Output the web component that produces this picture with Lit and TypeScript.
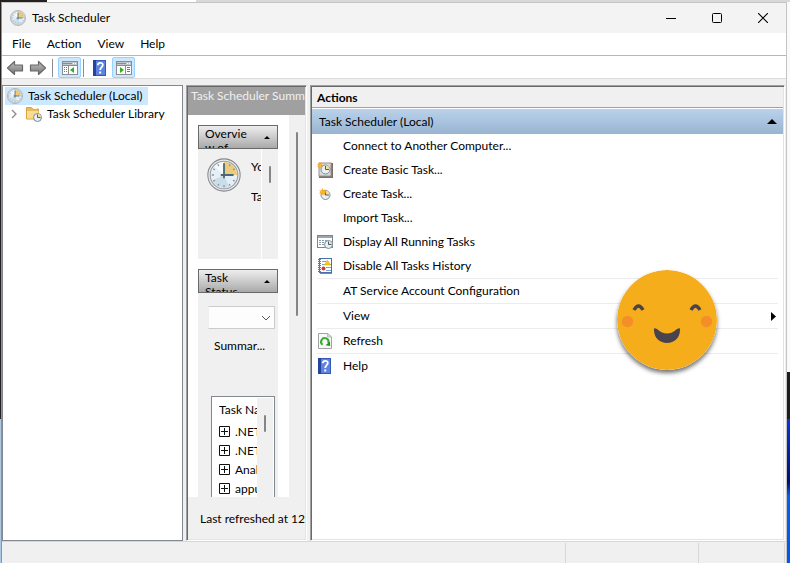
import { LitElement, html, css, svg, nothing } from "lit";
import { customElement } from "lit/decorators.js";

const clock = (size: number) => html`<svg width=${size} height=${size} viewBox="0 0 32 32" aria-hidden="true">
  <circle cx="16" cy="16" r="15.2" fill="#ececee" stroke="#85878b" stroke-width="1"></circle>
  <circle cx="16" cy="16" r="13" fill="#e6eff5" stroke="#9b9da2" stroke-width="1"></circle>
  <path d="M5 21A12 12 0 0 0 21 27L16 16Z" fill="#cadeea"></path>
  <path d="M7 8A12 12 0 0 1 16 4V16Z" fill="#f6fafc"></path>
  <path d="M16 3.7A12.3 12.3 0 0 1 28.3 16H16Z" fill="#eccb7c"></path>
  <path d="M16 25.5v2M4.5 16h2M5.9 10.2l1.6.9M10.2 5.9l.9 1.6M21.8 5.9l-.9 1.6M26.1 10.2l-1.6.9M26.1 21.8l-1.6-.9M21.8 26.1l-.9-1.6M10.2 26.1l.9-1.6M5.9 21.8l1.6-.9" stroke="#8397a8" stroke-width="1.2"></path>
  <path d="M16 5V19M13 16H25" stroke="#46687f" stroke-width="1.7" fill="none"></path>
</svg>`;

const miniClock = (x: number, y: number, r: number) => svg`
  <circle cx=${x} cy=${y} r=${r} fill="#e6f1f6" stroke="#7b8c98" stroke-width="1"></circle>
  <path d="M${x} ${y - r + 0.5}A${r - 0.5} ${r - 0.5} 0 0 1 ${x + r - 0.5} ${y}H${x}Z" fill="#f3dfa4"></path>
  <path d="M${x} ${y - r + 1}V${y}H${x + r - 1}" fill="none" stroke="#44606f" stroke-width="1"></path>`;

const star = svg`<path d="M4.500 0l1 2.700 2.700-1-1 2.600 2.600 1.200-2.800.9.6 2.700-2.600-1.400-1.800 2-.2-2.900-3 .2 2-2.200-2-1.900 2.900.1z" fill="#f5a623"></path><circle cx="4.500" cy="5" r="2" fill="#ffb52c"></circle>`;

const help = html`<svg width="13" height="16" viewBox="0 0 13 16" aria-hidden="true">
  <rect width="13" height="16" fill="#3358bd"></rect><rect x="3" y="1" width="9" height="14" fill="#5d83de"></rect>
  <path d="M0 0h3v16H0z" fill="#2444a1"></path>
  <path d="M4.800 5.200C4.900 2 10 2.100 9.800 5c0 2-2.600 2.200-2.600 5" fill="none" stroke="#fff" stroke-width="1.800"></path>
  <rect x="6.200" y="11.500" width="2" height="2" fill="#fff"></rect></svg>`;

const arrow = (forward: boolean) => html`<svg width="18" height="16" viewBox="0 0 18 16" aria-hidden="true">
  <defs><linearGradient id="metal" x2="0" y2="1"><stop stop-color="#c2c2c2"></stop><stop offset="1" stop-color="#747474"></stop></linearGradient></defs>
  <path d=${forward ? "M16.500 8L9.500 1.500V5H1.500v6h8v3.500z" : "M1.500 8l7-6.500V5h8v6h-8v3.500z"} fill="url(#metal)" stroke="#686868" stroke-width="1.200" stroke-linejoin="round"></path></svg>`;

const paneIcon = (right: boolean) => html`<svg width="16" height="14" viewBox="0 0 16 14" aria-hidden="true">
  <rect x=".5" y=".5" width="15" height="13" fill="#fff" stroke="#8a8d91"></rect>
  <path d="M1 1h14v3H1z" fill="#c2c5c9"></path><path d="M1 4.500h14M1 2.500h9" stroke="#8a8d91"></path>
  <path d="M11 2.500h1M13 2.500h1" stroke="#fff"></path>
  ${right
    ? svg`<path d="M9.500 5v8" stroke="#8a8d91"></path><path d="M11 6.500h3M11 8.500h3M11 10.500h3" stroke="#5a7c9c"></path><path d="M4 6l4 3-4 3z" fill="#35ad20"></path>`
    : svg`<path d="M6.500 5v8" stroke="#8a8d91"></path><path d="M2 6.500h3M2 8.500h3M2 10.500h3" stroke="#5a7c9c" stroke-dasharray="1 1 2 1"></path><path d="M12 6L8 9l4 3z" fill="#35ad20"></path>`}
</svg>`;

const folder = html`<svg width="16" height="16" viewBox="0 0 16 16" aria-hidden="true">
  <path d="M.5 13V1.500h5l1 1.500h6v10z" fill="#e9bd5c" stroke="#d5a443"></path><path d="M1 5h11.500v7.500H1z" fill="#fbdc8e"></path><path d="M7 2.500h4" stroke="#fff8e0"></path>
  ${miniClock(11.5, 11.5, 4)}</svg>`;

const basicTask = html`<svg width="16" height="16" viewBox="0 0 16 16" aria-hidden="true">
  <rect x="2" y="1" width="14" height="15" fill="#77706c"></rect><rect x="2" y="1" width="12" height="13" fill="#dedbd7" stroke="#9c918b"></rect>
  ${miniClock(8.5, 7.5, 4.5)}<g transform="scale(.7)">${star}</g></svg>`;
const createTask = html`<svg width="16" height="16" viewBox="0 0 16 16" aria-hidden="true">
  ${miniClock(8.5, 9, 4.5)}<g transform="translate(2 2) scale(.8)">${star}</g></svg>`;
const running = html`<svg width="16" height="16" viewBox="0 0 16 16" aria-hidden="true">
  <rect x=".5" y="1.500" width="15" height="12" fill="#fff" stroke="#7a8590"></rect><path d="M1 2h14v2H1z" fill="#9aa7b1"></path>
  <path d="M2 6.500h8M2 8.500h7M2 10.500h5" stroke="#8a99a5" stroke-dasharray="2 1"></path>${miniClock(11.5, 10.5, 4)}</svg>`;
const history = html`<svg width="16" height="16" viewBox="0 0 16 16" aria-hidden="true">
  <rect x="2.500" y=".5" width="12" height="14" fill="#fff" stroke="#4c6eaa"></rect><path d="M3 15.500h12" stroke="#888"></path>
  <path d="M5 3.500h4M5 6.500h9M9 9.500h5M9 12.500h5" stroke="#7aa2dc"></path><path d="M1 1.500h3M1 3.500h3M1 5.500h3M1 7.500h3M1 9.500h3M1 11.500h3M1 13.500h3" stroke="#777"></path>
  <path d="M10.500 2l3 5h-6z" fill="#f6c915" stroke="#d5a600" stroke-width=".5"></path><circle cx="6.500" cy="10.500" r="2" fill="#e03434"></circle></svg>`;
const refresh = html`<svg width="16" height="16" viewBox="0 0 16 16" aria-hidden="true">
  <path d="M1.500.5h9l4 3.500v11.500h-13z" fill="#fafafa" stroke="#a2a2a2"></path><path d="M10.500.5v3.500h4z" fill="#dedede" stroke="#aaa" stroke-width=".7"></path>
  <path d="M5.600 11.800A3.700 3.700 0 1 1 11.300 10" fill="none" stroke="#36ad2b" stroke-width="2"></path><path d="M13 8.500l.2 4.600-4.700-.8z" fill="#23941d"></path></svg>`;

const triangle = html`<svg width="6" height="3" viewBox="0 0 6 3" aria-hidden="true"><path d="M3 0l3 3H0z"></path></svg>`;

interface Action { label: string; icon?: unknown; rule?: boolean; submenu?: boolean; }

const ACTIONS: Action[] = [
  { label: "Connect to Another Computer..." },
  { label: "Create Basic Task...", icon: basicTask },
  { label: "Create Task...", icon: createTask },
  { label: "Import Task..." },
  { label: "Display All Running Tasks", icon: running },
  { label: "Disable All Tasks History", icon: history },
  { label: "AT Service Account Configuration", rule: true },
  { label: "View", rule: true, submenu: true },
  { label: "Refresh", icon: refresh, rule: true },
  { label: "Help", icon: help, rule: true },
];

const base = css`
  * { box-sizing: border-box; }
  button { font: inherit; color: inherit; background: none; border: 0; padding: 0; margin: 0; text-align: left; white-space: nowrap; }
  svg { display: block; flex: none; }
  h2, h3, p, ul { margin: 0; padding: 0; font: inherit; list-style: none; }
`;

@customElement("summary-pane")
class SummaryPane extends LitElement {
  static styles = [base, css`
    :host { display: flex; flex-direction: column; min-width: 0; min-height: 0; overflow: hidden; background: #f0f0f0;
      border: 1px solid; border-color: #a0a0a0 #fff #fff #a0a0a0; box-shadow: inset 1px 1px #696969, inset -1px -1px #e3e3e3; padding: 1px; }
    .title { flex: none; height: 28px; background: #a0a0a0; color: #f0f0f0; padding: 0 3px; line-height: 18px; white-space: nowrap; overflow: hidden; }
    .scroll { flex: 1; min-height: 0; display: flex; background: #fff; }
    .content { flex: 1; min-width: 0; display: flex; flex-direction: column; gap: 10px; padding: 10px 11px 0 10px; }
    .track { flex: none; width: 16px; background: #f0f0f0; display: flex; justify-content: center; padding-top: 17px; }
    .thumb { width: 2px; height: 17px; border-radius: 1px; background: #858585; }
    .thumb.long { height: 184px; }
    .section { display: flex; flex-direction: column; flex: none; }
    .section.status { flex: 1; min-height: 0; }
    .head { flex: none; display: flex; align-items: center; justify-content: space-between; height: 24px; padding: 0 7px 0 6px;
      border: 1px solid #696969; background: linear-gradient(#eee, #a9a9a9); overflow: hidden; }
    .name { align-self: flex-start; width: 42px; padding-top: 1px; line-height: 14px; white-space: normal; overflow-wrap: anywhere; }
    .overview { display: flex; height: 110px; background: #f0f0f0; overflow: hidden; }
    .clip { flex: 1; min-width: 0; overflow: hidden; display: flex; gap: 10px; padding: 9px 0 0 9px; border-right: 1px solid #fff; }
    .lines { display: flex; flex-direction: column; gap: 12px; line-height: 18px; white-space: nowrap; }
    .body { flex: 1; min-height: 0; display: flex; flex-direction: column; background: #f0f0f0; overflow: hidden; padding: 13px 3px 0 10px; }
    .combo { flex: none; display: grid; height: 23px; align-items: center; }
    select { grid-area: 1 / 1; width: 100%; height: 100%; appearance: none; background: #fdfdfd; border: 1px solid #ccc; border-left-color: #f0f0f0; border-radius: 1px; font: inherit; }
    .chevron { grid-area: 1 / 1; justify-self: end; margin-right: 4px; pointer-events: none; }
    .summary { flex: none; line-height: 18px; margin: 8px 0 41px; padding-left: 6px; white-space: nowrap; }
    .list { flex: 1; min-height: 0; display: flex; overflow: hidden; margin-left: 3px; background: #fff; border: 1px solid #828790; border-bottom: 0; padding: 1px 1px 0 7px; }
    .tableclip { flex: 1; min-width: 0; overflow: hidden; }
    table { border-collapse: collapse; white-space: nowrap; }
    th { font-weight: 400; text-align: left; height: 24px; padding: 0; }
    td { height: 19px; padding: 0; }
    .task { display: flex; align-items: center; gap: 5px; }
    .foot { flex: none; height: 42px; line-height: 44px; padding-left: 12px; white-space: nowrap; overflow: hidden; }
  `];

  render() {
    return html`
      <h2 class="title">Task Scheduler Summary</h2>
      <div class="scroll">
        <div class="content">
          <section class="section">
            <button class="head"><span class="name">Overview of</span>${triangle}</button>
            <div class="overview">
              <div class="clip">${clock(34)}<div class="lines"><p>You can</p><p>Tasks are</p></div></div>
              <div class="track"><div class="thumb"></div></div>
            </div>
          </section>
          <section class="section status">
            <button class="head"><span class="name">Task Status</span>${triangle}</button>
            <div class="body">
              <div class="combo">
                <select aria-label="Period"><option></option></select>
                <svg class="chevron" width="10" height="6" viewBox="0 0 10 6"><path d="M1 1l4 4 4-4" fill="none" stroke="#555"></path></svg>
              </div>
              <p class="summary">Summar...</p>
              <div class="list">
                <div class="tableclip"><table>
                  <thead><tr><th>Task Name</th></tr></thead>
                  <tbody>${[".NET Framework", ".NET Framework", "AnalyzeSystem", "appuriverifier"].map((name) => html`<tr><td><button class="task">
                    <svg width="11" height="11" viewBox="0 0 11 11"><path d="M.5.500h10v10H.5zM2 5.500h7M5.500 2v7" fill="none" stroke="#111"></path></svg>${name}</button></td></tr>`)}</tbody>
                </table></div>
                <div class="track"><div class="thumb"></div></div>
              </div>
            </div>
          </section>
        </div>
        <div class="track"><div class="thumb long"></div></div>
      </div>
      <p class="foot">Last refreshed at 12/</p>`;
  }
}

@customElement("actions-pane")
class ActionsPane extends LitElement {
  static styles = [base, css`
    :host { display: block; min-width: 0; overflow: hidden; background: #fff; padding: 1px;
      border: 1px solid; border-color: #a0a0a0 #fff #fff #a0a0a0; box-shadow: inset 1px 1px #696969, inset -1px -1px #e3e3e3; }
    .title { height: 21px; line-height: 22px; padding-left: 5px; font-weight: 700; background: #f0f0f0; border-bottom: 1px solid #a0a0a0; }
    .group { display: flex; width: 100%; align-items: center; justify-content: space-between; height: 25px; margin-top: 1px; padding: 0 6px 0 7px; background: linear-gradient(#bad2eb, #99b4d1); }
    .items { padding: 0 5px; }
    .rule { border-top: 1px solid #ececec; }
    .item { display: flex; align-items: center; width: 100%; height: 24px; padding-right: 2px; }
    .icon { width: 26px; flex: none; }
    .label { flex: 1; }
    .narrow svg { margin-left: 1px; }
  `];

  render() {
    return html`
      <h2 class="title">Actions</h2>
      <button class="group">Task Scheduler (Local)<svg width="10" height="5" viewBox="0 0 10 5"><path d="M5 0l5 5H0z"></path></svg></button>
      <ul class="items">${ACTIONS.map((a) => html`<li class=${a.rule ? "rule" : "plain"}><button class="item">
        <span class="icon ${a.label === "Help" ? "narrow" : ""}">${a.icon ?? nothing}</span><span class="label">${a.label}</span>
        ${a.submenu ? html`<svg width="5" height="9" viewBox="0 0 5 9"><path d="M0 0l5 4.500L0 9z"></path></svg>` : nothing}
      </button></li>`)}</ul>`;
  }
}

@customElement("app-root")
class AppRoot extends LitElement {
  static styles = [base, css`
    :host { display: flex; flex-direction: column; height: 100vh; overflow: hidden; box-sizing: border-box; padding: 2px 3px 0 1px; color: #000;
      font: 12px/16px "Segoe UI", Lato, "Open Sans", sans-serif;
      background:
        linear-gradient(90deg, #25211f 47px, #fff 47px 196px, #d9d9d9 196px) top / 100% 2px no-repeat,
        linear-gradient(#25211f 419px, #adc8e3 419px) left / 2px 100% no-repeat,
        linear-gradient(#fafafa 372px, #1d1d1d 372px 419px, #0a35d8 419px, #020c78 482px, #075cf5 496px, #0554f0) right / 4px 100% no-repeat; }
    .window { flex: 1; min-height: 0; display: flex; flex-direction: column; background: #f0f0f0; border: 1px solid #c4c4c4; border-bottom: 0; border-left-color: #8b939b; }
    .titlebar { flex: none; display: flex; align-items: center; height: 30px; background: #f3f3f3; padding-left: 8px; gap: 6px; }
    .caption { flex: 1; }
    .controls { display: flex; }
    .control { width: 46px; height: 28px; display: grid; place-items: center; }
    .menu { flex: none; display: flex; align-items: center; gap: 16px; height: 22px; padding-left: 10px; background: #fff; }
    .toolbar { flex: none; display: flex; align-items: center; height: 24px; padding: 1px 0 0 4px; background: #fff; border: solid #b4b6b9; border-width: 1px 0; border-bottom-color: #dcdcdc; }
    .nav { margin-right: 5px; }
    .sep { width: 1px; height: 18px; background: #8d8d8d; }
    .toggle { display: grid; place-items: center; width: 23px; height: 21px; background: #cce8ff; border: 1px solid #99d1ff; border-radius: 2px; }
    .toggle.first { margin: 0 2px 0 5px; }
    .help { margin: 0 6px 0 9px; }
    .panes { flex: 1; min-height: 0; display: grid; grid-template-columns: 181px 121px minmax(0, 1fr); gap: 3px; padding: 6px 1px 0 0; }
    .tree { min-width: 0; background: #fff; border: 1px solid #828790; padding: 1px 2px; }
    .node { display: flex; align-items: center; gap: 5px; height: 18px; }
    .node.selected { background: #cce8ff; padding: 0 5px 0 2px; }
    .node.child { padding-left: 6px; }
    .expander { margin-right: 4px; }
    .status { flex: none; display: flex; justify-content: flex-end; height: 22px; border-top: 1px solid #d7d7d7; padding: 1px 1px 0 0; }
    .cell { border: solid #d7d7d7; border-width: 0 0 0 1px; width: 133px; }
    .cell.last { width: 87px; border-right-width: 1px; }
    .face { position: fixed; top: 270px; right: 73px; border-radius: 50%; box-shadow: 0 3px 4px rgba(0, 0, 0, .55); }
  `];

  render() {
    return html`
      <main class="window">
        <header class="titlebar">${clock(16)}<span class="caption">Task Scheduler</span>
          <div class="controls">
            <button class="control" aria-label="Minimize"><svg width="10" height="10"><path d="M0 5.500h10" stroke="#000"></path></svg></button>
            <button class="control" aria-label="Maximize"><svg width="10" height="10"><rect x=".5" y=".5" width="9" height="9" rx="1" fill="none" stroke="#000"></rect></svg></button>
            <button class="control" aria-label="Close"><svg width="10" height="10"><path d="M0 0l10 10M10 0L0 10" stroke="#000" stroke-width="1.100"></path></svg></button>
          </div>
        </header>
        <nav class="menu">${["File", "Action", "View", "Help"].map((m) => html`<button>${m}</button>`)}</nav>
        <div class="toolbar" role="toolbar">
          <button class="nav" aria-label="Back">${arrow(false)}</button><button class="nav" aria-label="Forward">${arrow(true)}</button>
          <span class="sep"></span><button class="toggle first" aria-label="Console tree">${paneIcon(false)}</button><span class="sep"></span>
          <button class="help" aria-label="Help">${help}</button><button class="toggle" aria-label="Action pane">${paneIcon(true)}</button>
        </div>
        <div class="panes">
          <nav class="tree">
            <button class="node selected">${clock(16)}Task Scheduler (Local)</button>
            <button class="node child"><svg class="expander" width="6" height="10" viewBox="0 0 6 10"><path d="M1 1l4 4-4 4" fill="none" stroke="#8a8a8a" stroke-width="1.300"></path></svg>${folder}Task Scheduler Library</button>
          </nav>
          <summary-pane></summary-pane>
          <actions-pane></actions-pane>
        </div>
        <footer class="status"><span class="cell"></span><span class="cell last"></span></footer>
      </main>
      <svg class="face" width="100" height="100" viewBox="0 0 100 100" role="img" aria-label="Smiling face">
        <circle cx="50" cy="50" r="50" fill="#f5ad1b"></circle>
        <circle cx="10.500" cy="51.500" r="5.700" fill="#f48e29"></circle><circle cx="89.500" cy="51.500" r="5.700" fill="#f48e29"></circle>
        <path d="M17 40Q21.500 32 26 40M74 40Q78.500 32 83 40" fill="none" stroke="#49434d" stroke-width="3.400"></path>
        <path d="M37 60Q36 57 40 59Q50 68 60 59Q64 57 63 60C63 68 57 73 50 73C43 73 37 68 37 60Z" fill="#49434d"></path>
      </svg>`;
  }
}
